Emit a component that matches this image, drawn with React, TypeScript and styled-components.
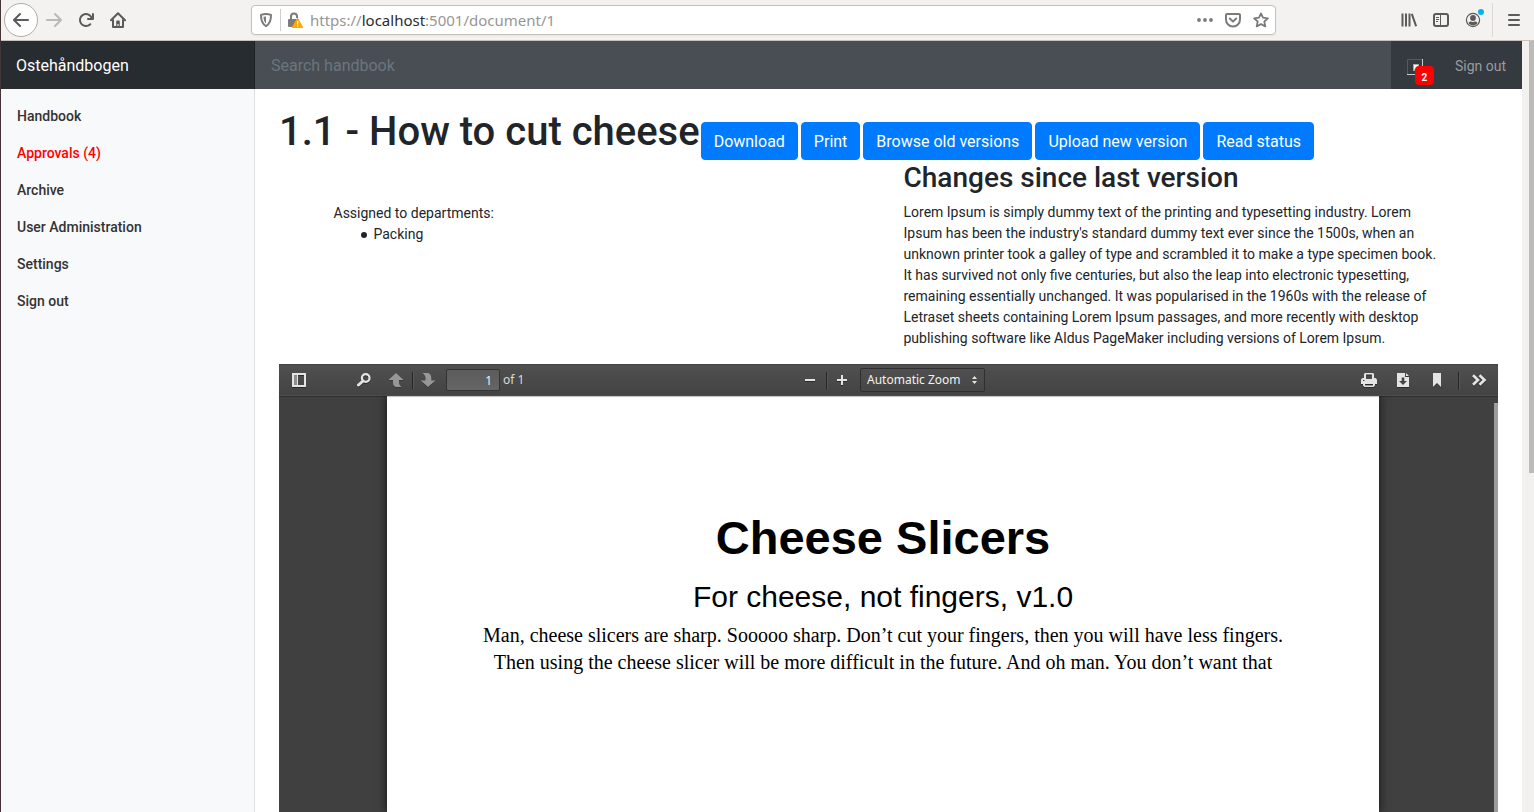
import React from "react";
import styled, { createGlobalStyle, css } from "styled-components";

const GlobalStyle = createGlobalStyle`
  *, *::before, *::after { box-sizing: border-box; }
  body {
    margin: 0;
    background: #fff;
    color: #212529;
    font-family: Roboto, "Liberation Sans", sans-serif;
    font-size: 14px;
    line-height: 21px;
  }
  button, input, select { font: inherit; color: inherit; margin: 0; }
  button { cursor: pointer; }
`;

const uiFont = css`
  font-family: "Noto Sans", "Open Sans", sans-serif;
`;

const Window = styled.div`
  display: flex;
  flex-direction: column;
  height: 100vh;
  overflow: hidden;
  border-left: 1px solid #433438;
`;

/* Browser chrome */

const BrowserBar = styled.header`
  ${uiFont}
  display: flex;
  align-items: center;
  flex: none;
  height: 41px;
  padding: 0 4px 0 3px;
  background: #f4f2f0;
  border-bottom: 1px solid #c8c2bb;
  color: #5b5a58;
`;

const ChromeButton = styled.button<{ $round?: boolean; $faded?: boolean }>`
  position: relative;
  display: flex;
  align-items: center;
  justify-content: center;
  flex: none;
  width: ${(p) => (p.$round ? 34 : 32)}px;
  height: ${(p) => (p.$round ? 34 : 32)}px;
  padding: 0;
  border: ${(p) => (p.$round ? "1px solid #b0aeac" : "0")};
  border-radius: ${(p) => (p.$round ? "50%" : "2px")};
  background: ${(p) => (p.$round ? "#fdfdfd" : "transparent")};
  color: ${(p) => (p.$faded ? "#bab8b6" : "inherit")};
`;

const AddressBar = styled.div`
  display: flex;
  align-items: center;
  flex: 1;
  min-width: 0;
  height: 30px;
  margin: 0 117px;
  padding: 0 6px;
  background: #fff;
  border: 1px solid #c4c0bc;
  border-radius: 4px;
  box-shadow: 0 1px 2px rgba(0, 0, 0, 0.06);
  color: #7c7b7a;
`;

const AddressIcons = styled.div<{ $gap: number }>`
  display: flex;
  align-items: center;
  flex: none;
  gap: ${(p) => p.$gap}px;
`;

const AddressDivider = styled.span`
  width: 1px;
  height: 22px;
  background: #cfccca;
`;

const Url = styled.a`
  flex: 1;
  min-width: 0;
  margin-left: 7px;
  overflow: hidden;
  white-space: nowrap;
  font-size: 15px;
  line-height: 20px;
  color: #979695;
  text-decoration: none;

  strong {
    font-weight: 400;
    color: #2b2b2b;
  }
`;

const AccountDot = styled.span`
  position: absolute;
  top: 5px;
  right: 5px;
  width: 6px;
  height: 6px;
  border-radius: 50%;
  background: #00b3f4;
`;

const ChromeSeparator = styled.span`
  width: 1px;
  height: 34px;
  margin: 0 5px 0 3px;
  background: #dcd9d6;
`;

/* Site */

const Viewport = styled.div`
  display: flex;
  flex: 1;
  min-height: 0;
`;

const Site = styled.div`
  display: flex;
  flex-direction: column;
  flex: 1;
  min-width: 0;
`;

const ScrollTrack = styled.div`
  display: flex;
  justify-content: flex-end;
  flex: none;
  width: 12px;
  background: #f2f1f0;
`;

const ScrollThumb = styled.div`
  width: 5px;
  height: 56%;
  background: #bdbbba;
`;

const NavBar = styled.nav`
  display: flex;
  flex: none;
  height: 48px;
  background: #343a40;
`;

const Brand = styled.a`
  flex: none;
  width: 254px;
  padding: 13px 15px 11px;
  background: #272c30;
  box-shadow: inset -1px 0 0 #1d2124;
  color: #fff;
  font-size: 16px;
  line-height: 24px;
  text-decoration: none;
`;

const SearchInput = styled.input`
  flex: 1;
  min-width: 0;
  padding: 13px 16px 11px;
  border: 0;
  border-radius: 0;
  background: #494e55;
  color: #fff;
  font-size: 16px;
  line-height: 24px;

  &::placeholder {
    color: #6c757d;
    opacity: 1;
  }
`;

const NavActions = styled.div`
  display: flex;
  align-items: center;
  gap: 32px;
  padding: 0 16px;
`;

const NotificationLink = styled.a`
  position: relative;
  display: block;
  width: 16px;
  height: 16px;
  margin-top: 3px;
`;

const Badge = styled.span`
  position: absolute;
  top: 7px;
  left: 8px;
  width: 19px;
  height: 19px;
  padding-top: 2px;
  border-radius: 4px;
  background: #f00;
  color: #fff;
  font-size: 10px;
  font-weight: 700;
  line-height: 19px;
  text-align: center;
`;

const SignOutLink = styled.a`
  margin-top: 2px;
  color: #999c9f;
  text-decoration: none;
`;

const Body = styled.div`
  display: flex;
  flex: 1;
  min-height: 0;
`;

const SideBar = styled.aside`
  flex: none;
  width: 254px;
  padding-top: 9px;
  background: #f8f9fb;
  border-right: 1px solid #dfe0e2;
`;

const SideList = styled.ul`
  margin: 0;
  padding: 0;
  list-style: none;
`;

const SideLink = styled.a<{ $alert?: boolean }>`
  display: block;
  padding: 8px 16px;
  color: ${(p) => (p.$alert ? "#f00" : "#333")};
  font-weight: 500;
  text-decoration: none;
`;

const Main = styled.main`
  display: flex;
  flex-direction: column;
  flex: 1;
  min-width: 0;
  padding: 19px 24px 0;
`;

const TitleRow = styled.div`
  display: flex;
  align-items: flex-start;
  gap: 1px;
`;

const Title = styled.h1`
  margin: 0;
  font-size: 40px;
  font-weight: 500;
  line-height: 48px;
  white-space: nowrap;
`;

const ActionGroup = styled.div`
  display: flex;
  gap: 3px;
  margin-top: 14px;
`;

const PrimaryButton = styled.button`
  padding: 7px 12px 5px;
  border: 1px solid #007bff;
  border-radius: 4px;
  background: #007bff;
  color: #fff;
  font-size: 16px;
  line-height: 24px;
  white-space: nowrap;
`;

const Details = styled.div`
  display: grid;
  grid-template-columns: 1fr 1fr;
  width: 100%;
  max-width: 1140px;
  margin: 0 auto;
`;

const Departments = styled.section`
  padding: 43px 15px 0;

  p { margin: 0; }

  ul {
    margin: 0;
    padding-left: 27px;
    list-style: none;
  }

  li {
    display: flex;
    align-items: center;
    gap: 7px;
  }

  li::before {
    content: "";
    width: 6px;
    height: 6px;
    border-radius: 50%;
    background: currentColor;
  }
`;

const Changes = styled.section`
  padding: 1px 15px 0;

  h2 {
    margin: 0 0 7px;
    font-size: 28px;
    font-weight: 500;
    line-height: 34px;
  }

  p { margin: 0 0 15px; }
`;

/* PDF viewer */

const Viewer = styled.section`
  display: flex;
  flex-direction: column;
  flex: 1;
  min-height: 0;
  background: #404040;
`;

const PdfToolbar = styled.div`
  ${uiFont}
  position: relative;
  display: grid;
  grid-template-columns: 1fr auto 1fr;
  align-items: center;
  flex: none;
  height: 32px;
  padding: 0 3px 0 5px;
  background: linear-gradient(#505050, #434343);
  box-shadow: inset 0 1px 1px rgba(0, 0, 0, 0.15), inset 0 -1px 0 rgba(255, 255, 255, 0.05),
    0 1px 0 rgba(0, 0, 0, 0.15), 0 1px 1px rgba(0, 0, 0, 0.1);
  color: #d9d9d9;
  font-size: 12px;
  line-height: 16px;
`;

const ToolGroup = styled.div<{ $end?: boolean }>`
  display: flex;
  align-items: center;
  justify-content: ${(p) => (p.$end ? "flex-end" : "flex-start")};
`;

const ToolButton = styled.button<{ $faded?: boolean; $width?: number }>`
  display: flex;
  align-items: center;
  justify-content: center;
  flex: none;
  width: ${(p) => p.$width ?? 32}px;
  height: 24px;
  padding: 0;
  border: 0;
  background: transparent;
  color: #e4e4e4;
  opacity: ${(p) => (p.$faded ? 0.5 : 1)};
  filter: drop-shadow(0 1px 0 rgba(0, 0, 0, 0.4));
`;

const ToolGap = styled.span`
  width: 34px;
`;

const ToolDivider = styled.span<{ $spaced?: boolean }>`
  width: 1px;
  height: 17px;
  margin: 0 ${(p) => (p.$spaced ? 4 : 0)}px;
  background: #252525;
  box-shadow: 1px 0 0 #575757;
`;

const PageInput = styled.input`
  width: 54px;
  height: 22px;
  margin: 0 3px;
  padding: 0 7px;
  border: 1px solid #333;
  border-radius: 2px;
  background: linear-gradient(#5b5b5b, #656565);
  color: #f2f2f2;
  text-align: right;
`;

const ZoomBox = styled.div`
  position: relative;
  display: flex;
  align-items: center;
  width: 125px;
  height: 24px;
  margin-left: 3px;
  border: 1px solid #2f2f2f;
  border-radius: 2px;
  background: linear-gradient(#4f4f4f, #464646);

  svg {
    position: absolute;
    right: 6px;
    pointer-events: none;
  }
`;

const ZoomSelect = styled.select`
  appearance: none;
  width: 100%;
  height: 22px;
  padding: 0 16px 0 6px;
  border: 0;
  background: transparent;
  color: #f2f2f2;
`;

const PdfCanvas = styled.div`
  display: flex;
  flex: 1;
  min-height: 0;
  overflow: hidden;
`;

const PdfPage = styled.article`
  flex: 1;
  min-width: 0;
  margin: 0 109px 0 108px;
  padding: 112px 94px 0;
  background: #fff;
  box-shadow: 0 0 9px 1px rgba(0, 0, 0, 0.6);
  color: #000;
  text-align: center;

  h1 {
    margin: 0 0 12px;
    font: 700 47px/60px "Liberation Sans", Arial, sans-serif;
  }

  h2 {
    margin: 0 0 8px;
    font: 400 30px/34px "Liberation Sans", Arial, sans-serif;
  }

  p {
    margin: 0;
    font: 400 20px/27px "Liberation Serif", "Times New Roman", serif;
  }
`;

const PdfScroll = styled.div`
  flex: none;
  display: flex;
  justify-content: flex-end;
  width: 10px;
  padding-top: 7px;

  &::after {
    content: "";
    width: 4px;
    background: #9c9c9c;
  }
`;

/* Icons */

const Icon = ({ size = 16, children }: { size?: number; children: React.ReactNode }) => (
  <svg width={size} height={size} viewBox="0 0 16 16" fill="currentColor" aria-hidden="true">
    {children}
  </svg>
);

const line = { fill: "none", stroke: "currentColor", strokeWidth: 2, strokeLinecap: "round", strokeLinejoin: "round" } as const;

const BackIcon = () => (
  <Icon><path d="M15 7H3.414l4.293-4.293a1 1 0 0 0-1.414-1.414l-6 6a1 1 0 0 0 0 1.414l6 6a1 1 0 0 0 1.414-1.414L3.414 9H15a1 1 0 0 0 0-2z" /></Icon>
);
const ForwardIcon = () => (
  <Icon><path d="M15.707 7.293l-6-6a1 1 0 0 0-1.414 1.414L12.586 7H1a1 1 0 0 0 0 2h11.586l-4.293 4.293a1 1 0 1 0 1.414 1.414l6-6a1 1 0 0 0 0-1.414z" /></Icon>
);
const ReloadIcon = () => (
  <Icon><path d="M15 1a1 1 0 0 0-1 1v2.418A6.995 6.995 0 1 0 8 15a6.954 6.954 0 0 0 4.95-2.05 1 1 0 0 0-1.414-1.414A5.019 5.019 0 1 1 12.549 6H10a1 1 0 0 0 0 2h5a1 1 0 0 0 1-1V2a1 1 0 0 0-1-1z" /></Icon>
);
const HomeIcon = () => (
  <Icon>
    <path {...line} d="M1 8.2L8 1.2l7 7M3 8v7h10V8" />
    <path d="M6.2 14V9.6a1 1 0 0 1 1-1h1.6a1 1 0 0 1 1 1V14H8.6v-2H7.4v2z" />
  </Icon>
);
const ShieldIcon = () => (
  <Icon>
    <path {...line} d="M8 2c2 0 3.700.4 5 .9 0 5-1 8.900-5 11.200C4 11.800 3 7.900 3 2.900 4.300 2.400 6 2 8 2z" />
    <path d="M8 4.500v7C6.200 10 5.500 7.500 5.500 4.800z" />
  </Icon>
);
const LockWarningIcon = () => (
  <Icon>
    <path d="M2 7h9a1 1 0 0 1 1 1v6a1 1 0 0 1-1 1H2a1 1 0 0 1-1-1V8a1 1 0 0 1 1-1z" />
    <path fill="none" stroke="currentColor" strokeWidth="2" d="M4 8V4.600a3 3 0 0 1 6 0V6" />
    <path d="M10.500 6.200L15.800 15.500H5.200z" fill="#ffa800" stroke="#ffa800" strokeLinejoin="round" />
    <path d="M10 9h1.300v3.400H10zM10 13.400h1.300v1.200H10z" fill="#fff" />
  </Icon>
);
const MoreIcon = () => (
  <Icon><circle cx="2" cy="8" r="1.9" /><circle cx="8" cy="8" r="1.900" /><circle cx="14" cy="8" r="1.900" /></Icon>
);
const PocketIcon = () => (
  <Icon>
    <path {...line} d="M2 2h12a1 1 0 0 1 1 1v4.500a7 7 0 0 1-14 0V3a1 1 0 0 1 1-1z" />
    <path {...line} d="M4.800 6.500L8 9.600l3.200-3.100" />
  </Icon>
);
const StarIcon = () => (
  <Icon><path {...line} strokeWidth={1.800} d="M8 1.500l2 4.200 4.900.6-3.600 3.200 1 4.900L8 12.100l-4.300 2.300 1-4.900L1.100 6.300 6 5.700z" /></Icon>
);
const LibraryIcon = () => (
  <Icon><path {...line} strokeLinecap="butt" d="M1.500 1.500v13M5 1.500v13M8.500 1.500v13M10.800 1.800l4.300 12.400" /></Icon>
);
const SidebarIcon = () => (
  <Icon>
    <rect x="1" y="2" width="14" height="12" rx="2" {...line} />
    <path fill="none" stroke="currentColor" d="M7.500 2v12M3 5.500h3M3 7.500h3M3 9.500h2" />
  </Icon>
);
const AccountIcon = () => (
  <Icon>
    <circle cx="8" cy="8" r="6.600" fill="none" stroke="currentColor" strokeWidth="1.200" />
    <circle cx="8" cy="6" r="2.900" />
    <path d="M3.500 11c.7-1.200 1.700-1.500 2.500-1.500.6.6 3.400.6 4 0 .8 0 1.800.3 2.500 1.500a5.300 5.300 0 0 1-9 0z" />
  </Icon>
);
const MenuIcon = () => (
  <Icon><path {...line} d="M3 3h10M3 8h10M3 13h10" /></Icon>
);
const BrokenImageIcon = () => (
  <Icon>
    <path fill="none" stroke="#59595c" d="M.5 16V.5H16" />
    <path fill="none" stroke="#c9cacb" d="M15.500 0v15.500H0" />
    <path fill="#aaa" d="M6 5h6v7H6z" />
    <path fill="#fff" d="M7 6h4v4H7z" />
  </Icon>
);

const PdfSidebarIcon = () => (
  <Icon><path fillRule="evenodd" d="M1 1h14v14H1zM3 3v10h10V3zM6 3v10h1V3z" /><path opacity=".5" d="M3 3h3v10H3z" /></Icon>
);
const PdfSearchIcon = () => (
  <Icon>
    <circle cx="9.700" cy="6" r="3.800" fill="none" stroke="currentColor" strokeWidth="2.200" />
    <path d="M7 9l-4.500 4" fill="none" stroke="currentColor" strokeWidth="3" strokeLinecap="round" />
  </Icon>
);
const PdfUpIcon = () => (
  <Icon><path d="M8 1l7.500 7H11v2.500c0 1.800.8 3 2.500 4.500H9c-2.800 0-4-1.700-4-4.500V8H.5z" /></Icon>
);
const PdfDownIcon = () => (
  <Icon><path d="M8 15L.800 8.500H5.500V6C5.500 4.200 4.500 2.700 2.500 1H7c3 0 4.300 2 4.300 5v2.500h4.200z" /></Icon>
);
const MinusIcon = () => <Icon><path d="M3 7h10v2H3z" /></Icon>;
const PlusIcon = () => <Icon><path d="M7 3h2v4h4v2H9v4H7V9H3V7h4z" /></Icon>;
const PrintIcon = () => (
  <Icon>
    <path fillRule="evenodd" d="M4 1h8l1 1v4h1.500L16 7.500V12h-2v1.500L12.500 15h-9L2 13.500V12H0V7.500L1.500 6H3V2zM5 2.500V7h6V2.500zM4 12v1.500h8V12z" />
    <path fill="#444" d="M2 8h1.500v1H2z" />
  </Icon>
);
const DownloadIcon = () => (
  <Icon>
    <path d="M2 1h8v4h4v10H2zM11 1l3 3h-3z" />
    <path fill="#444" d="M6.700 5.500h2.600V9H12l-4 4-4-4h2.700z" />
  </Icon>
);
const BookmarkIcon = () => <Icon><path d="M4 1h8v14l-4-4-4 4z" /></Icon>;
const MoreToolsIcon = () => (
  <Icon><path fill="none" stroke="currentColor" strokeWidth="2.600" d="M2 3.200L7 8l-5 4.800M8.500 3.200l5 4.800-5 4.800" /></Icon>
);
const SelectArrows = () => (
  <svg width="7" height="10" viewBox="0 0 7 10" fill="#e4e4e4" aria-hidden="true">
    <path d="M3.500 1L6 4H1zM3.500 9L1 6h5z" />
  </svg>
);

const sideLinks = [
  { label: "Handbook" },
  { label: "Approvals (4)", alert: true },
  { label: "Archive" },
  { label: "User Administration" },
  { label: "Settings" },
  { label: "Sign out" },
];

const documentActions = ["Download", "Print", "Browse old versions", "Upload new version", "Read status"];

export default function App() {
  return (
    <>
      <GlobalStyle />
      <Window>
        <BrowserBar>
          <ChromeButton $round aria-label="Back"><BackIcon /></ChromeButton>
          <ChromeButton $faded aria-label="Forward"><ForwardIcon /></ChromeButton>
          <ChromeButton aria-label="Reload"><ReloadIcon /></ChromeButton>
          <ChromeButton aria-label="Home"><HomeIcon /></ChromeButton>
          <AddressBar>
            <AddressIcons $gap={6}>
              <ShieldIcon />
              <AddressDivider />
              <LockWarningIcon />
            </AddressIcons>
            <Url href="#">https://<strong>localhost</strong>:5001/document/1</Url>
            <AddressIcons $gap={12}>
              <MoreIcon />
              <PocketIcon />
              <StarIcon />
            </AddressIcons>
          </AddressBar>
          <ChromeButton aria-label="Library"><LibraryIcon /></ChromeButton>
          <ChromeButton aria-label="Sidebars"><SidebarIcon /></ChromeButton>
          <ChromeButton aria-label="Account"><AccountIcon /><AccountDot /></ChromeButton>
          <ChromeSeparator />
          <ChromeButton aria-label="Menu"><MenuIcon /></ChromeButton>
        </BrowserBar>
        <Viewport>
          <Site>
            <NavBar>
              <Brand href="#">Ostehåndbogen</Brand>
              <SearchInput type="text" placeholder="Search handbook" aria-label="Search handbook" />
              <NavActions>
                <NotificationLink href="#" aria-label="Notifications">
                  <BrokenImageIcon />
                  <Badge>2</Badge>
                </NotificationLink>
                <SignOutLink href="#">Sign out</SignOutLink>
              </NavActions>
            </NavBar>
            <Body>
              <SideBar>
                <SideList>
                  {sideLinks.map((link) => (
                    <li key={link.label}>
                      <SideLink href="#" $alert={link.alert}>{link.label}</SideLink>
                    </li>
                  ))}
                </SideList>
              </SideBar>
              <Main>
                <TitleRow>
                  <Title>1.1 - How to cut cheese</Title>
                  <ActionGroup>
                    {documentActions.map((label) => (
                      <PrimaryButton key={label} type="button">{label}</PrimaryButton>
                    ))}
                  </ActionGroup>
                </TitleRow>
                <Details>
                  <Departments>
                    <p>Assigned to departments:</p>
                    <ul><li>Packing</li></ul>
                  </Departments>
                  <Changes>
                    <h2>Changes since last version</h2>
                    <p>
                      Lorem Ipsum is simply dummy text of the printing and typesetting industry. Lorem Ipsum has been
                      the industry's standard dummy text ever since the 1500s, when an unknown printer took a galley of
                      type and scrambled it to make a type specimen book. It has survived not only five centuries, but
                      also the leap into electronic typesetting, remaining essentially unchanged. It was popularised in
                      the 1960s with the release of Letraset sheets containing Lorem Ipsum passages, and more recently
                      with desktop publishing software like Aldus PageMaker including versions of Lorem Ipsum.
                    </p>
                  </Changes>
                </Details>
                <Viewer>
                  <PdfToolbar>
                    <ToolGroup>
                      <ToolButton $width={30} aria-label="Toggle sidebar"><PdfSidebarIcon /></ToolButton>
                      <ToolGap />
                      <ToolButton aria-label="Find"><PdfSearchIcon /></ToolButton>
                      <ToolButton $faded aria-label="Previous page"><PdfUpIcon /></ToolButton>
                      <ToolDivider />
                      <ToolButton $width={30} $faded aria-label="Next page"><PdfDownIcon /></ToolButton>
                      <PageInput type="text" defaultValue="1" aria-label="Page" />
                      <span>of 1</span>
                    </ToolGroup>
                    <ToolGroup>
                      <ToolButton aria-label="Zoom out"><MinusIcon /></ToolButton>
                      <ToolDivider />
                      <ToolButton $width={30} aria-label="Zoom in"><PlusIcon /></ToolButton>
                      <ZoomBox>
                        <ZoomSelect aria-label="Zoom" defaultValue="auto">
                          <option value="auto">Automatic Zoom</option>
                        </ZoomSelect>
                        <SelectArrows />
                      </ZoomBox>
                    </ToolGroup>
                    <ToolGroup $end>
                      <ToolButton $width={34} aria-label="Print"><PrintIcon /></ToolButton>
                      <ToolButton $width={34} aria-label="Download"><DownloadIcon /></ToolButton>
                      <ToolButton $width={34} aria-label="Current view"><BookmarkIcon /></ToolButton>
                      <ToolDivider $spaced />
                      <ToolButton aria-label="Tools"><MoreToolsIcon /></ToolButton>
                    </ToolGroup>
                  </PdfToolbar>
                  <PdfCanvas>
                    <PdfPage>
                      <h1>Cheese Slicers</h1>
                      <h2>For cheese, not fingers, v1.0</h2>
                      <p>
                        Man, cheese slicers are sharp. Sooooo sharp. Don’t cut your fingers, then you will have less
                        fingers. Then using the cheese slicer will be more difficult in the future. And oh man. You
                        don’t want that
                      </p>
                    </PdfPage>
                    <PdfScroll />
                  </PdfCanvas>
                </Viewer>
              </Main>
            </Body>
          </Site>
          <ScrollTrack><ScrollThumb /></ScrollTrack>
        </Viewport>
      </Window>
    </>
  );
}
